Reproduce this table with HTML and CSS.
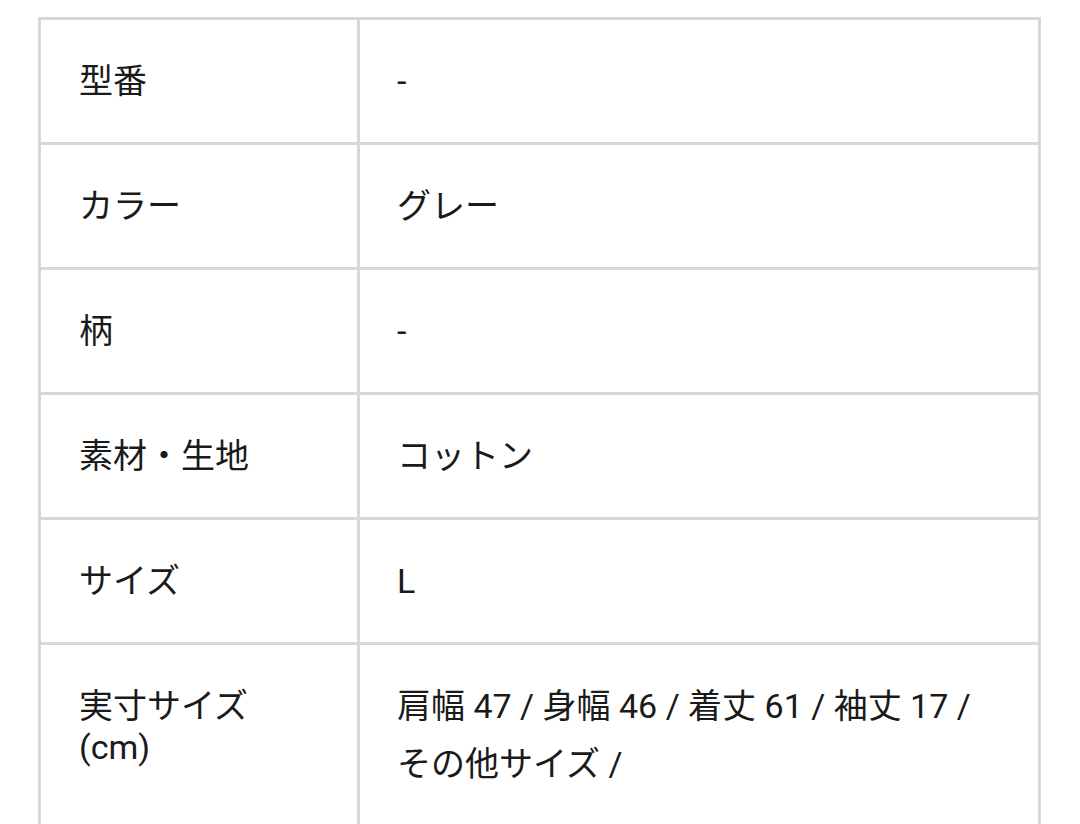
FILE: index.html
```html
<!DOCTYPE html>
<html lang="ja">
<head>
<meta charset="utf-8">
<link rel="stylesheet" href="styles.css">
</head>
<body>
<table class="spec">
  <tbody>
    <tr><th class="label">型番</th><td class="value">-</td></tr>
    <tr><th class="label">カラー</th><td class="value">グレー</td></tr>
    <tr><th class="label">柄</th><td class="value">-</td></tr>
    <tr><th class="label">素材・生地</th><td class="value">コットン</td></tr>
    <tr><th class="label">サイズ</th><td class="value">L</td></tr>
    <tr><th class="label">実寸サイズ<br>(cm)</th><td class="value">肩幅 47 / 身幅 46 / 着丈 61 / 袖丈 17 /<br>その他サイズ /</td></tr>
    <tr><th class="label">&nbsp;</th><td class="value">&nbsp;</td></tr>
  </tbody>
</table>
</body>
</html>
```
FILE: styles.css
```css
html, body {
  margin: 0;
  padding: 0;
  background: #ffffff;
}
body {
  padding: 17px 0 0 38px;
  font-family: Roboto, "Noto Sans CJK JP", sans-serif;
  color: #1a1a1a;
}
.spec {
  border-collapse: separate;
  border-spacing: 0;
  border-top: 3px solid #d8d8d8;
  border-left: 3px solid #d8d8d8;
}
.label, .value {
  border-right: 3px solid #d8d8d8;
  border-bottom: 3px solid #d8d8d8;
  vertical-align: top;
  text-align: left;
  font-weight: 400;
  font-size: 34px;
  box-sizing: border-box;
}
.label {
  width: 319px;
  padding: 41px 20px 40px 38px;
  line-height: 41px;
}
.value {
  width: 681px;
  padding: 32px 20px 32px 37px;
  line-height: 58px;
}
```
